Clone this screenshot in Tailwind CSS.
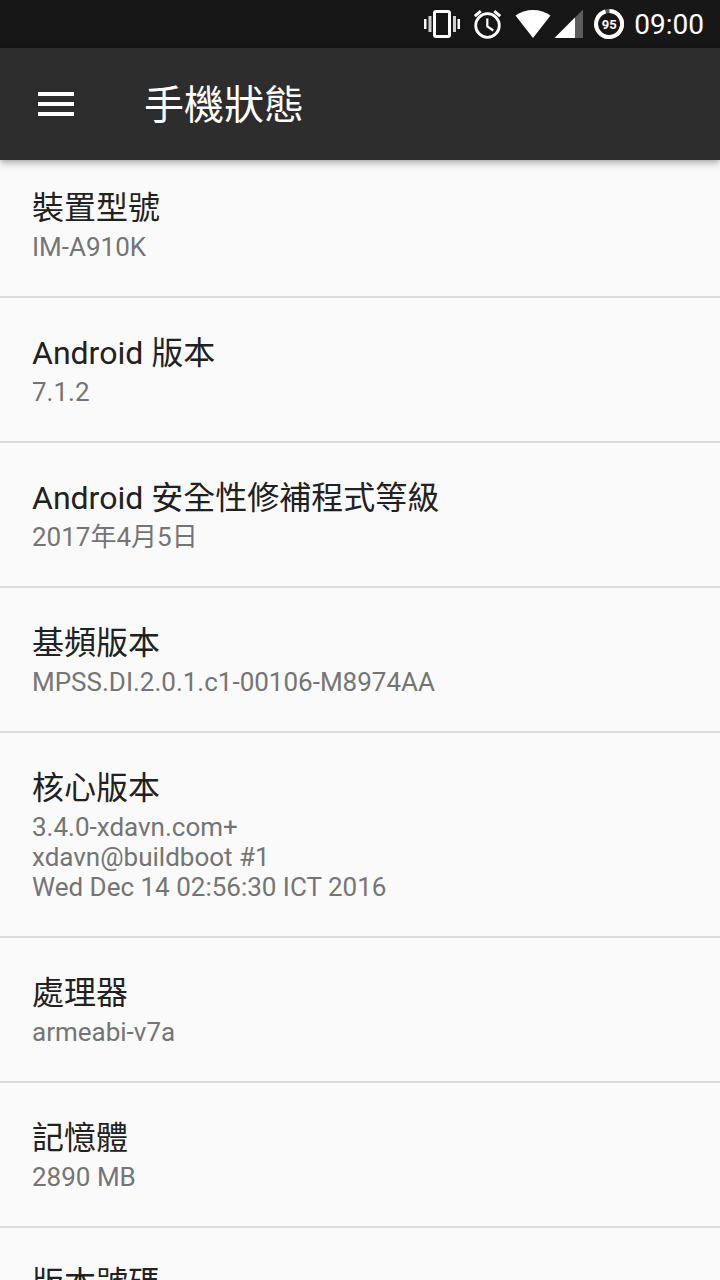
<!DOCTYPE html>
<html lang="zh-Hant">
<head>
<meta charset="utf-8">
<meta name="viewport" content="width=device-width, initial-scale=1">
<title>手機狀態</title>
<script src="https://cdn.jsdelivr.net/npm/@tailwindcss/browser@4"></script>
</head>
<body class="flex h-screen flex-col overflow-hidden bg-[#fafafa] font-[Roboto,'Noto_Sans_CJK_TC',sans-serif] text-[#212121]">
  <div class="flex h-12 shrink-0 items-center justify-end bg-[#171717] pr-4 text-white">
    <!-- vibrate, alarm, wifi, signal -->
    <svg class="h-12 w-[170px]" viewBox="420 0 170 48" fill="none" aria-hidden="true">
      <rect x="434.5" y="11.5" width="15" height="25" rx="1.5" stroke="#fff" stroke-width="3"/>
      <path d="M424 19h2.500v10h-2.500zM457.500 19h2.500v10h-2.500z" fill="#fff"/>
      <path d="M428.500 16h3v16h-3zM453 16h3v16h-3z" fill="#fff" fill-opacity=".8"/>
      <circle cx="487.500" cy="25.500" r="11.800" stroke="#fff" stroke-width="2.800"/>
      <path d="M487.300 18.500v8l6 4" stroke="#fff" stroke-width="2.200"/>
      <path d="M474.800 16.200l6-5M500.200 16.200l-6-5" stroke="#fff" stroke-width="3"/>
      <path d="M533 38L515.500 15.500C525 8 541 8 550.500 15.500z" fill="#fff"/>
      <path d="M554.500 38L583 9.500V38z" fill="#fff" fill-opacity=".3"/>
      <path d="M554.500 38L575 17.500V38z" fill="#fff"/>
    </svg>
    <!-- battery ring -->
    <div class="relative ml-1 size-[30px]">
      <svg class="size-full" viewBox="0 0 30 30" fill="none" aria-hidden="true">
        <circle cx="15" cy="15" r="13" stroke="#5c5c5c" stroke-width="4"/>
        <path d="M15.500 2A13 13 0 1 1 11.500 2.500" stroke="#fff" stroke-width="4"/>
      </svg>
      <span class="absolute inset-0 flex items-center justify-center pt-px font-[Roboto,sans-serif] text-[13px] leading-none font-bold">95</span>
    </div>
    <time class="ml-2.5 pt-0.5 text-[28px] leading-12">09:00</time>
  </div>

  <header class="z-10 flex h-28 shrink-0 items-center bg-[#2d2d2d] pl-[38px] text-white shadow-[0_2px_8px_rgba(0,0,0,0.4)]">
    <button type="button" aria-label="選單" class="flex w-9 flex-col gap-1.5">
      <span class="h-1 w-full bg-white"></span>
      <span class="h-1 w-full bg-white"></span>
      <span class="h-1 w-full bg-white"></span>
    </button>
    <h1 class="ml-[70px] pt-1 text-[40px] leading-12">手機狀態</h1>
  </header>

  <main class="min-h-0 flex-1 overflow-y-auto [scrollbar-width:none]">
    <dl class="-mt-[7px] text-[32px] leading-10">
      <div class="border-b-2 border-[#dcdcdc] px-8 pt-[35px] pb-[34px]">
        <dt>裝置型號</dt>
        <dd class="mt-1 text-[26px] leading-[30px] text-[#757575]">IM-A910K</dd>
      </div>
      <div class="border-b-2 border-[#dcdcdc] px-8 pt-[35px] pb-[34px]">
        <dt>Android 版本</dt>
        <dd class="mt-1 text-[26px] leading-[30px] text-[#757575]">7.1.2</dd>
      </div>
      <div class="border-b-2 border-[#dcdcdc] px-8 pt-[35px] pb-[34px]">
        <dt>Android 安全性修補程式等級</dt>
        <dd class="mt-1 text-[26px] leading-[30px] text-[#757575]">2017年4月5日</dd>
      </div>
      <div class="border-b-2 border-[#dcdcdc] px-8 pt-[35px] pb-[34px]">
        <dt>基頻版本</dt>
        <dd class="mt-1 text-[26px] leading-[30px] text-[#757575]">MPSS.DI.2.0.1.c1-00106-M8974AA</dd>
      </div>
      <div class="border-b-2 border-[#dcdcdc] px-8 pt-[35px] pb-[34px]">
        <dt>核心版本</dt>
        <dd class="mt-1 text-[26px] leading-[30px] text-[#757575]">3.4.0-xdavn.com+<br>xdavn@buildboot #1<br>Wed Dec 14 02:56:30 ICT 2016</dd>
      </div>
      <div class="border-b-2 border-[#dcdcdc] px-8 pt-[35px] pb-[34px]">
        <dt>處理器</dt>
        <dd class="mt-1 text-[26px] leading-[30px] text-[#757575]">armeabi-v7a</dd>
      </div>
      <div class="border-b-2 border-[#dcdcdc] px-8 pt-[35px] pb-[34px]">
        <dt>記憶體</dt>
        <dd class="mt-1 text-[26px] leading-[30px] text-[#757575]">2890 MB</dd>
      </div>
      <div class="px-8 pt-[35px]">
        <dt>版本號碼</dt>
      </div>
    </dl>
  </main>
</body>
</html>
